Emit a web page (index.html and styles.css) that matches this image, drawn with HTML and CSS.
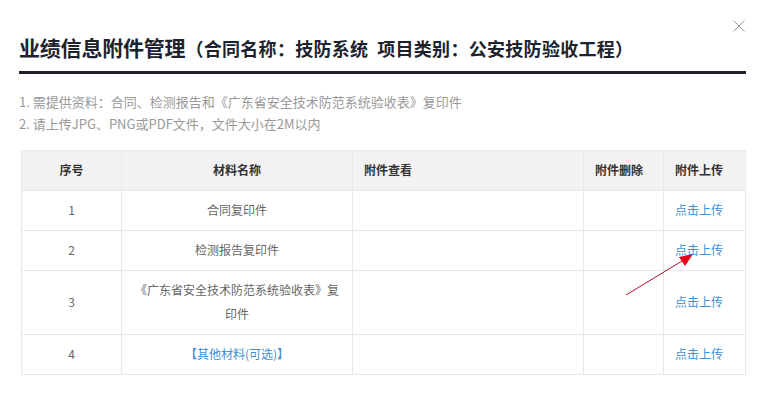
FILE: index.html
```
<!DOCTYPE html>
<html lang="zh-CN">

<head>
	<meta charset="UTF-8">
	<meta name="viewport" content="width=device-width, initial-scale=1.0">
	<link rel="stylesheet" href="styles.css">
	<title>业绩信息附件管理</title>
</head>

<body>
	<div class="modal">
		<a class="modal-close" href="#" title="关闭">
			<svg width="12" height="12" viewBox="0 0 12 12">
				<path d="M0.5 0.5 L11.5 11.5 M11.5 0.5 L0.5 11.5" stroke="#9a9a9a" stroke-width="1" fill="none" />
			</svg>
		</a>

		<h2 class="modal-title">
			业绩信息附件管理<span class="sub">（合同名称：技防系统&nbsp;&nbsp;项目类别：公安技防验收工程）</span>
		</h2>

		<div class="notes">
			<p>1. 需提供资料：合同、检测报告和《广东省安全技术防范系统验收表》复印件</p>
			<p>2. 请上传JPG、PNG或PDF文件，文件大小在2M以内</p>
		</div>

		<table class="attach-table">
			<colgroup>
				<col style="width:100px">
				<col style="width:231px">
				<col style="width:231px">
				<col style="width:80px">
				<col style="width:82px">
			</colgroup>
			<thead>
				<tr>
					<th class="center">序号</th>
					<th class="center">材料名称</th>
					<th>附件查看</th>
					<th>附件删除</th>
					<th>附件上传</th>
				</tr>
			</thead>
			<tbody>
				<tr>
					<td class="center">1</td>
					<td class="center">合同复印件</td>
					<td></td>
					<td></td>
					<td><a href="#">点击上传</a></td>
				</tr>
				<tr>
					<td class="center">2</td>
					<td class="center">检测报告复印件</td>
					<td></td>
					<td></td>
					<td><a href="#">点击上传</a></td>
				</tr>
				<tr>
					<td class="center">3</td>
					<td class="center">《广东省安全技术防范系统验收表》复印件</td>
					<td></td>
					<td></td>
					<td><a href="#">点击上传</a></td>
				</tr>
				<tr>
					<td class="center">4</td>
					<td class="center"><a href="#">【其他材料(可选)】</a></td>
					<td></td>
					<td></td>
					<td><a href="#">点击上传</a></td>
				</tr>
			</tbody>
		</table>

		<!-- annotation arrow pointing at the upload link -->
		<svg class="arrow" width="80" height="50" viewBox="0 0 80 50">
			<line x1="2" y1="44" x2="58" y2="10" stroke="#b0102a" stroke-width="1" />
			<polygon points="69,3 55,6 61,15" fill="#e8001c" />
		</svg>
	</div>
</body>

</html>
```

FILE: styles.css
```
* {
	box-sizing: border-box;
}

body {
	margin: 0;
	background-color: #fff;
	font-family: "Microsoft YaHei", "Noto Sans CJK SC", "Liberation Sans", sans-serif;
	color: #666;
}

.modal {
	position: relative;
	width: 765px;
	padding: 32px 19px 0 19px;
}

.modal-close {
	position: absolute;
	top: 20px;
	left: 733px;
	display: block;
	width: 12px;
	height: 12px;
	line-height: 0;
}

.modal-title {
	margin: 0;
	padding-bottom: 8px;
	border-bottom: 3px solid #1c232e;
	font-size: 21px;
	line-height: 30px;
	font-weight: bold;
	color: #1c232e;
	white-space: nowrap;
	letter-spacing: -0.2px;
}

.modal-title .sub {
	font-size: 18px;
	letter-spacing: 0.3px;
}

.notes {
	margin-top: 17px;
	font-size: 13px;
	line-height: 22px;
	color: #999;
}

.notes p {
	margin: 0;
}

.attach-table {
	width: 724px;
	margin: 15px 0 0 2px;
	border-collapse: collapse;
	table-layout: fixed;
	font-size: 12px;
}

.attach-table th,
.attach-table td {
	border: 1px solid #e8e8e8;
	padding: 7px 10px 8px 11px;
	line-height: 24px;
	text-align: left;
	vertical-align: middle;
}

.attach-table th {
	background-color: #f2f2f2;
	color: #333;
	font-weight: bold;
}

.attach-table td {
	color: #666;
}

.attach-table .center {
	text-align: center;
	padding-left: 10px;
}

.attach-table a {
	color: #3f8fd2;
	text-decoration: none;
}

.arrow {
	position: absolute;
	left: 624px;
	top: 251px;
}
```
